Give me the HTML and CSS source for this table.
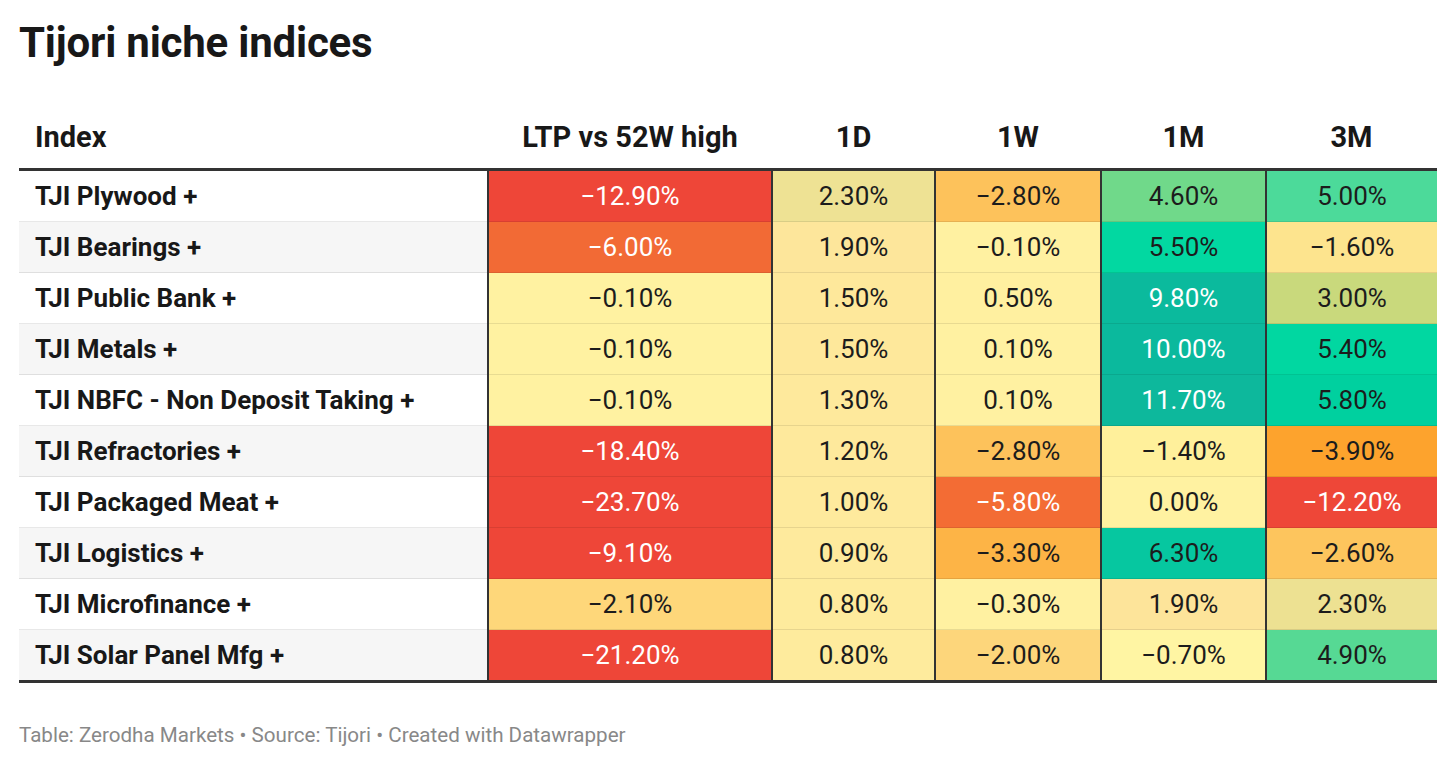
FILE: index.html
```html
<!DOCTYPE html>
<html lang="en">
<head>
<meta charset="utf-8">
<title>Tijori niche indices</title>
<link rel="stylesheet" href="styles.css">
</head>
<body>
<div class="page">
  <h1 class="title">Tijori niche indices</h1>
  <table class="heat">
    <colgroup>
      <col class="c-index"><col class="c-ltp"><col class="c-1d"><col class="c-1w"><col class="c-1m"><col class="c-3m">
    </colgroup>
    <thead>
      <tr>
        <th class="h-index">Index</th>
        <th>LTP vs 52W high</th>
        <th>1D</th>
        <th>1W</th>
        <th>1M</th>
        <th>3M</th>
      </tr>
    </thead>
    <tbody>
      <tr>
        <td class="name">TJI Plywood +</td>
        <td class="v w" style="background:#ee4638">−12.90%</td>
        <td class="v" style="background:#eee294">2.30%</td>
        <td class="v" style="background:#fdc25b">−2.80%</td>
        <td class="v" style="background:#70d98a">4.60%</td>
        <td class="v" style="background:#4cda9a">5.00%</td>
      </tr>
      <tr>
        <td class="name">TJI Bearings +</td>
        <td class="v w" style="background:#f26a35">−6.00%</td>
        <td class="v" style="background:#fde69b">1.90%</td>
        <td class="v" style="background:#fff1a1">−0.10%</td>
        <td class="v" style="background:#02d8a1">5.50%</td>
        <td class="v" style="background:#fde48e">−1.60%</td>
      </tr>
      <tr>
        <td class="name">TJI Public Bank +</td>
        <td class="v" style="background:#fff2a1">−0.10%</td>
        <td class="v" style="background:#fee89b">1.50%</td>
        <td class="v" style="background:#fff0a0">0.50%</td>
        <td class="v w" style="background:#0bba9d">9.80%</td>
        <td class="v" style="background:#c9d97c">3.00%</td>
      </tr>
      <tr>
        <td class="name">TJI Metals +</td>
        <td class="v" style="background:#fff2a1">−0.10%</td>
        <td class="v" style="background:#fee89b">1.50%</td>
        <td class="v" style="background:#fff1a1">0.10%</td>
        <td class="v w" style="background:#0bb99d">10.00%</td>
        <td class="v" style="background:#01d7a1">5.40%</td>
      </tr>
      <tr>
        <td class="name">TJI NBFC - Non Deposit Taking +</td>
        <td class="v" style="background:#fff2a1">−0.10%</td>
        <td class="v" style="background:#fee99c">1.30%</td>
        <td class="v" style="background:#fff1a1">0.10%</td>
        <td class="v w" style="background:#0db89c">11.70%</td>
        <td class="v" style="background:#00d09f">5.80%</td>
      </tr>
      <tr>
        <td class="name">TJI Refractories +</td>
        <td class="v w" style="background:#ee4638">−18.40%</td>
        <td class="v" style="background:#fee99c">1.20%</td>
        <td class="v" style="background:#fdc25b">−2.80%</td>
        <td class="v" style="background:#fff09b">−1.40%</td>
        <td class="v" style="background:#fda32d">−3.90%</td>
      </tr>
      <tr>
        <td class="name">TJI Packaged Meat +</td>
        <td class="v w" style="background:#ee4638">−23.70%</td>
        <td class="v" style="background:#feea9d">1.00%</td>
        <td class="v w" style="background:#f36c34">−5.80%</td>
        <td class="v" style="background:#fff2a1">0.00%</td>
        <td class="v w" style="background:#ee4738">−12.20%</td>
      </tr>
      <tr>
        <td class="name">TJI Logistics +</td>
        <td class="v w" style="background:#ee4638">−9.10%</td>
        <td class="v" style="background:#feea9d">0.90%</td>
        <td class="v" style="background:#fdb446">−3.30%</td>
        <td class="v" style="background:#06c7a0">6.30%</td>
        <td class="v" style="background:#fdc55d">−2.60%</td>
      </tr>
      <tr>
        <td class="name">TJI Microfinance +</td>
        <td class="v" style="background:#fed77a">−2.10%</td>
        <td class="v" style="background:#feeb9d">0.80%</td>
        <td class="v" style="background:#fff1a1">−0.30%</td>
        <td class="v" style="background:#fde49a">1.90%</td>
        <td class="v" style="background:#ede192">2.30%</td>
      </tr>
      <tr>
        <td class="name">TJI Solar Panel Mfg +</td>
        <td class="v w" style="background:#ee4638">−21.20%</td>
        <td class="v" style="background:#feeb9d">0.80%</td>
        <td class="v" style="background:#fdd67b">−2.00%</td>
        <td class="v" style="background:#fff5a3">−0.70%</td>
        <td class="v" style="background:#56d994">4.90%</td>
      </tr>
    </tbody>
  </table>
  <p class="notes">Table: Zerodha Markets • Source: Tijori • Created with Datawrapper</p>
</div>
</body>
</html>
```

FILE: styles.css
```css
html, body {
  margin: 0;
  padding: 0;
  background: #ffffff;
}

body {
  font-family: Roboto, "Liberation Sans", Arial, sans-serif;
  color: #181818;
}

.page {
  padding: 18px 19px 0 19px;
  width: 1418px;
}

.title {
  margin: 0;
  font-size: 42px;
  line-height: 50px;
  font-weight: 700;
  color: #181818;
  letter-spacing: -0.2px;
}

.heat {
  margin-top: 38px;
  width: 1418px;
  border-collapse: collapse;
  table-layout: fixed;
}

.c-index { width: 469px; }
.c-ltp { width: 284px; }
.c-1d { width: 163px; }
.c-1w { width: 166px; }
.c-1m { width: 165px; }
.c-3m { width: 171px; }

.heat th {
  height: 62px;
  padding: 0 8px;
  font-size: 29px;
  font-weight: 700;
  text-align: center;
  vertical-align: middle;
  color: #181818;
  border-bottom: 3px solid #333333;
}

.heat th.h-index {
  text-align: left;
  padding-left: 16px;
}

.heat td {
  height: 50px;
  padding: 0 8px;
  font-size: 26px;
  vertical-align: middle;
  border-top: 1px solid rgba(0, 0, 0, 0.09);
}

.heat tbody tr:first-child td {
  border-top: none;
}

.heat tbody tr:last-child td {
  border-bottom: 3px solid #333333;
}

.heat td.name {
  padding-left: 16px;
  font-weight: 700;
  color: #181818;
  background: #ffffff;
  white-space: nowrap;
}

.heat tbody tr:nth-child(even) td.name {
  background: #f6f6f6;
}

.heat td.v {
  text-align: center;
  color: #1c1c1c;
  border-left: 2px solid #333333;
}

.heat td.v.w {
  color: #ffffff;
}

.notes {
  margin: 40px 0 0 0;
  font-size: 20.6px;
  line-height: 24px;
  color: #888888;
}
```
